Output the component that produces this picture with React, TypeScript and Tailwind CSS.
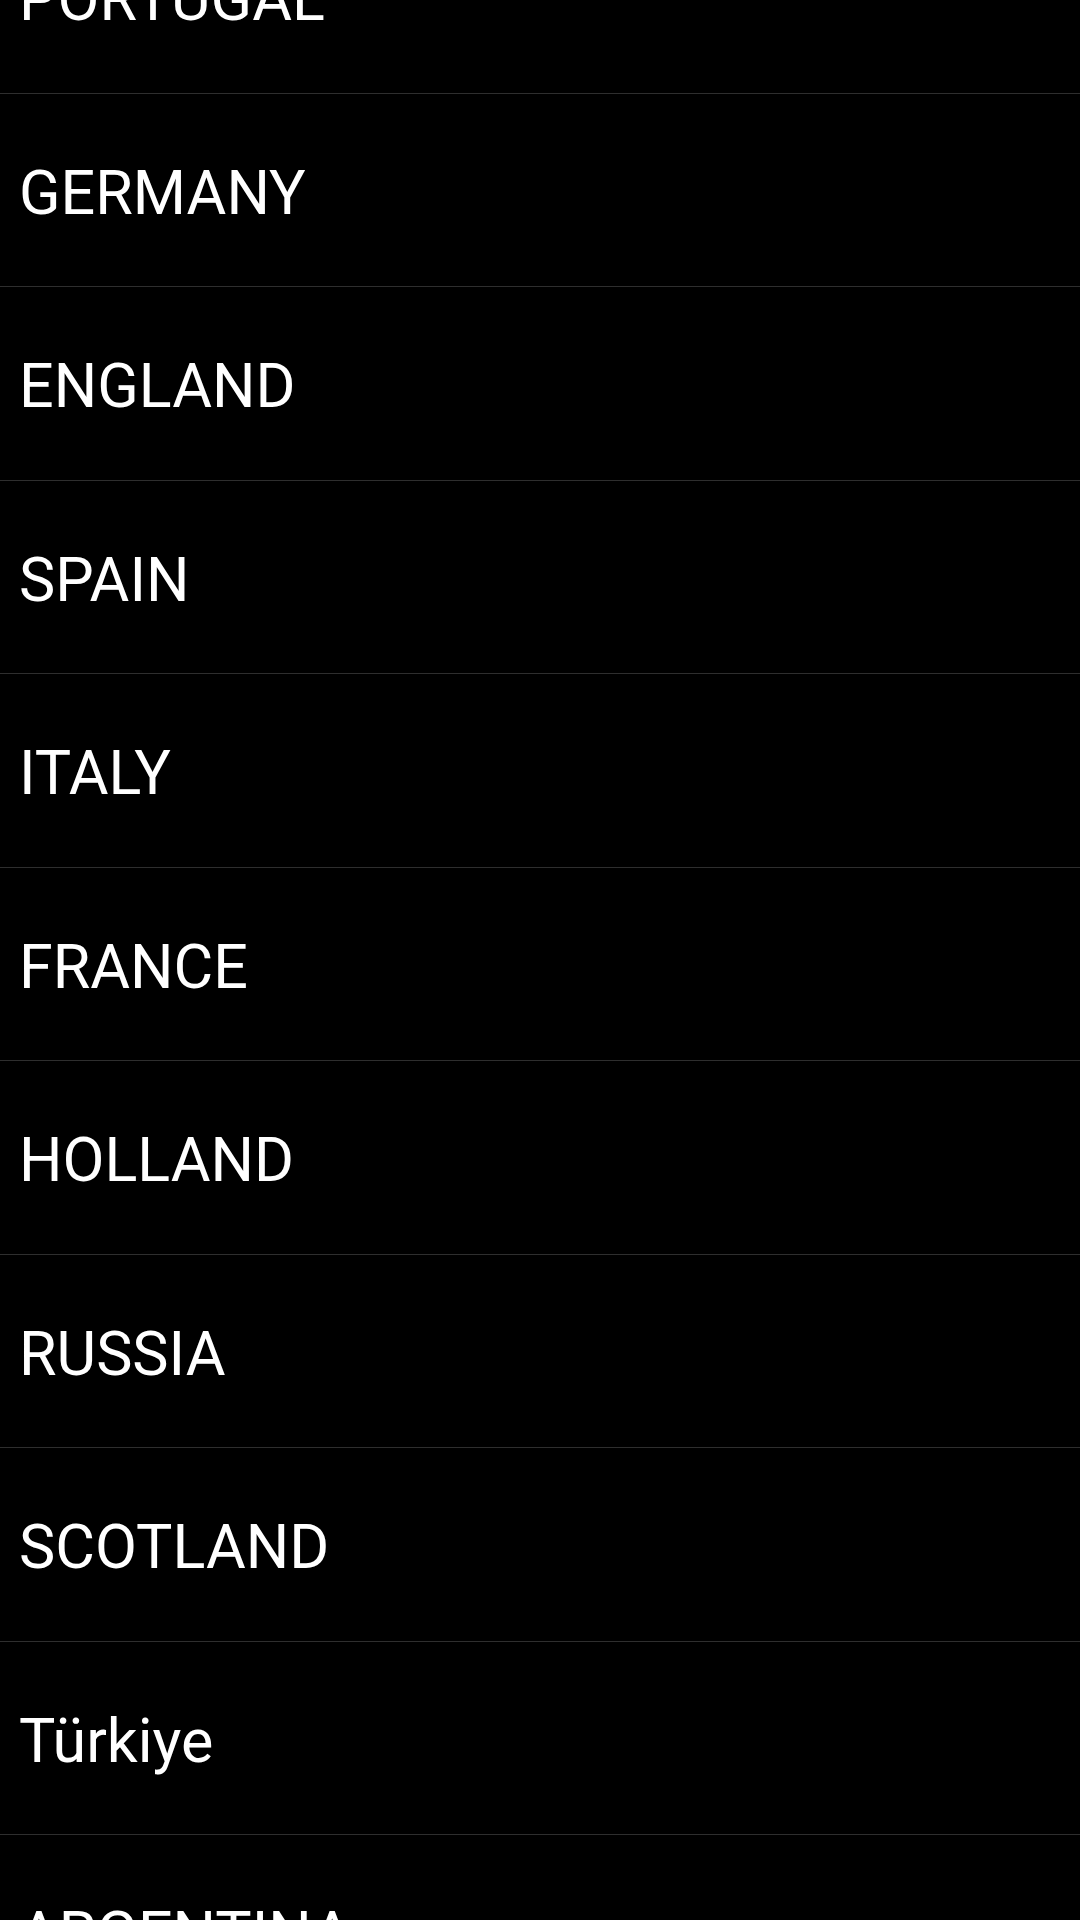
import React from 'react';

const countries = [
  'PORTUGAL',
  'GERMANY',
  'ENGLAND',
  'SPAIN',
  'ITALY',
  'FRANCE',
  'HOLLAND',
  'RUSSIA',
  'SCOTLAND',
  'Türkiye',
  'ARGENTINA',
];

export default function App() {
  return (
    <div className="bg-black h-[1920px] w-[1080px] overflow-hidden font-['Roboto',sans-serif]">
      {/* list scrolled by 100px */}
      <ul className="-mt-[100px]">
        {countries.map((name) => (
          <li
            key={name}
            className="h-[193.5px] flex items-center pl-[19px] pt-[7px] border-b-[1.5px] border-[#2e2e2e] text-white text-[61px] leading-none"
          >
            {name}
          </li>
        ))}
      </ul>
    </div>
  );
}
